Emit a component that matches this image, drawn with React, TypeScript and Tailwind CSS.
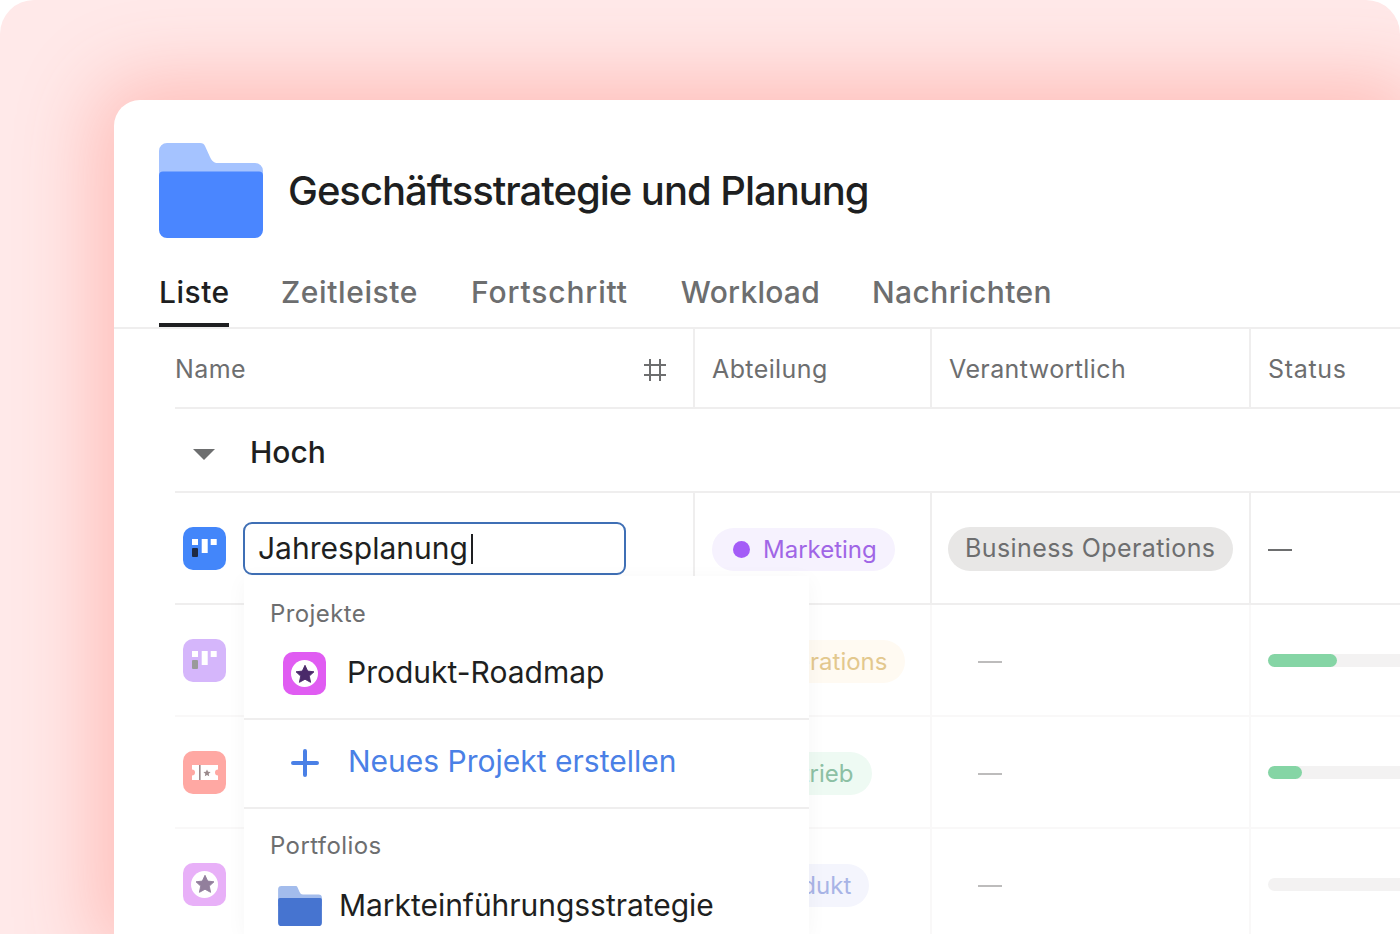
import React from "react";

const FONT = "font-['Inter','Noto_Sans',sans-serif]";

function Star({ color }: { color: string }) {
  return (
    <svg viewBox="0 0 24 24" className="h-[22px] w-[22px]">
      <path
        d="M12 2.5l2.9 6.3 6.9.8-5.1 4.7 1.400 6.800-6.100-3.400-6.100 3.400 1.400-6.800-5.100-4.700 6.900-.8z"
        fill={color}
        stroke={color}
        strokeLinejoin="round"
      />
    </svg>
  );
}

function BoardIcon({ bg, dark }: { bg: string; dark: string }) {
  return (
    <svg viewBox="0 0 43 43" className="h-[43px] w-[43px] shrink-0">
      <rect width="43" height="43" rx="10" fill={bg} />
      <rect x="9" y="12" width="6" height="6" fill="#fff" />
      <rect x="9" y="21" width="6" height="9" rx="1" fill={dark} />
      <rect x="18.7" y="12" width="6" height="14" fill="#fff" />
      <rect x="27.7" y="12" width="6" height="6" fill="#fff" />
    </svg>
  );
}

function StarIcon({ bg, star }: { bg: string; star: string }) {
  return (
    <div className={`flex h-[43px] w-[43px] shrink-0 items-center justify-center rounded-[10px] ${bg}`}>
      <div className="flex h-[27px] w-[27px] items-center justify-center rounded-full bg-white">
        <Star color={star} />
      </div>
    </div>
  );
}

function TicketIcon() {
  return (
    <svg viewBox="0 0 43 43" className="h-[43px] w-[43px] shrink-0">
      <rect width="43" height="43" rx="10" fill="#ffa8a3" />
      <path
        d="M9 14h26v4.500a3 3 0 0 0 0 6V29H9v-4.500a3 3 0 0 0 0-6z"
        fill="#fff"
      />
      <rect x="16" y="14" width="1.600" height="15" fill="#9a8a8c" />
      <path
        d="M24 18.500l1.100 2.300 2.500.3-1.900 1.700.5 2.500-2.200-1.200-2.200 1.200.5-2.500-1.900-1.700 2.500-.3z"
        fill="#9a8a8c"
      />
    </svg>
  );
}

function Folder({ className, back, front }: { className: string; back: string; front: string }) {
  return (
    <svg viewBox="0 0 104 95" className={className}>
      <path
        d="M8 0h33c3 0 4 1 5 3l5 11c2 4 4 6 8 6h37a8 8 0 0 1 8 8v20H0V8a8 8 0 0 1 8-8z"
        fill={back}
      />
      <path
        d="M4 28.500h96a4 4 0 0 1 4 4V87a8 8 0 0 1-8 8H8a8 8 0 0 1-8-8V32.500a4 4 0 0 1 4-4z"
        fill={front}
      />
    </svg>
  );
}

function Pill({ dot, bg, text, label }: { dot: string; bg: string; text: string; label: string }) {
  return (
    <div className={`flex h-[43px] w-fit items-center rounded-full pl-[21px] pr-[18px] ${bg}`}>
      <span className={`mr-[13px] h-[17px] w-[17px] rounded-full ${dot}`} />
      <span className={`pt-[2px] text-[24px] ${text}`}>{label}</span>
    </div>
  );
}

function Bar({ fill }: { fill: string }) {
  return (
    <div className="h-[13px] w-full rounded-l-full bg-[#f3f2f2]">
      <div className={`h-[13px] rounded-full bg-[#85d5a5] ${fill}`} />
    </div>
  );
}

const COLS = "grid grid-cols-[520px_237px_319px_1fr]";

function FadedRow({ icon, pill, bar }: { icon: React.ReactNode; pill: React.ReactNode; bar: React.ReactNode }) {
  return (
    <div className={`${COLS} h-[112px] border-b-2 border-[#f9f8f8]`}>
      <div className="flex items-center border-r-2 border-[#f9f8f8] pl-2">{icon}</div>
      <div className="flex items-center border-r-2 border-[#f9f8f8] pl-[17px] pt-[2px]">{pill}</div>
      <div className="flex items-center border-r-2 border-[#f9f8f8] pl-[46px] pt-[4px]">
        <span className="h-[2px] w-[24px] bg-[#bdbcbc]" />
      </div>
      <div className="flex items-center pl-[17px]">{bar}</div>
    </div>
  );
}

const TABS = [
  { label: "Liste", cls: "h-[62px] w-[70px] border-b-[4px] border-[#1e1f21] text-[#1e1f21]" },
  { label: "Zeitleiste", cls: "-ml-px tracking-[0.6px]" },
  { label: "Fortschritt", cls: "tracking-[0.85px]" },
  { label: "Workload", cls: "tracking-[0.25px]" },
  { label: "Nachrichten", cls: "-ml-px tracking-[0.4px]" },
];

export default function App() {
  return (
    <div className={`h-[934px] w-full overflow-hidden bg-white ${FONT}`}>
      {/* Pink panel */}
      <div className="h-[934px] overflow-hidden rounded-t-[34px] bg-[#ffe9e9] pl-[114px] pt-[100px]">
        {/* Card */}
        <div className="relative h-[834px] rounded-tl-[26px] bg-white shadow-[0_0_80px_20px_#ffbdb8]">
          {/* Title */}
          <div className="flex items-center pl-[45px] pt-[43px]">
            <Folder className="h-[95px] w-[104px]" back="#a5c3ff" front="#4a86ff" />
            <h1 className="ml-[25px] text-[40px] font-medium tracking-[-1.02px] text-[#1e1f21]">
              Geschäftsstrategie und Planung
            </h1>
          </div>

          {/* Tabs */}
          <div className="mt-[27px] flex h-[64px] gap-[53px] border-b-2 border-[#efeeee] pl-[45px] text-[30px] font-medium tracking-[0.5px] text-[#6d6e6f]">
            {TABS.map((tab) => (
              <div key={tab.label} className={`pt-[5px] ${tab.cls}`}>
                {tab.label}
              </div>
            ))}
          </div>

          {/* Table */}
          <div className="ml-[61px]">
            <div className={`${COLS} h-[80px] border-b-2 border-[#efeeee] text-[25px] tracking-[0.4px] text-[#6d6e6f]`}>
              <div className="flex items-center justify-between border-r-2 border-[#efeeee] pr-[27px] pt-[4px]">
                <span>Name</span>
                <svg viewBox="0 0 22 24" className="h-[24px] w-[22px]" stroke="#6d6e6f" strokeWidth="2">
                  <path d="M6 1v22M16 1v22M0 7h22M0 17h22" />
                </svg>
              </div>
              <div className="flex items-center border-r-2 border-[#efeeee] pl-[17px] pt-[4px]">Abteilung</div>
              <div className="flex items-center border-r-2 border-[#efeeee] pl-[17px] pt-[4px]">Verantwortlich</div>
              <div className="flex items-center pl-[17px] pt-[4px] tracking-[0.7px]">Status</div>
            </div>

            <div className="flex h-[84px] items-center border-b-2 border-[#efeeee] pl-[18px] pt-[4px] text-[30px] font-medium text-[#1e1f21]">
              <svg viewBox="0 0 22 11" className="mt-[4px] h-[11px] w-[22px]">
                <path d="M0 0h22L11 11z" fill="#6d6e6f" />
              </svg>
              <span className="ml-[35px]">Hoch</span>
            </div>

            {/* Active row */}
            <div className={`${COLS} h-[112px] border-b-2 border-[#efeeee]`}>
              <div className="flex items-center border-r-2 border-[#efeeee] pl-2 pt-[1px]">
                <BoardIcon bg="#4386fa" dark="#1e2a44" />
                <div className="ml-[17px] flex h-[53px] w-[383px] items-center rounded-[9px] border-2 border-[#3f6fb5] pl-[13px] text-[30px] text-[#1e1f21]">
                  Jahresplanung
                  <span className="ml-[3px] h-[30px] w-[2px] bg-[#1e1f21]" />
                </div>
              </div>
              <div className="flex items-center border-r-2 border-[#efeeee] pl-[17px] pt-[2px]">
                <Pill dot="bg-[#a45cf7]" bg="bg-[#f6f2fe]" text="text-[#a066e6]" label="Marketing" />
              </div>
              <div className="flex items-center border-r-2 border-[#efeeee] pl-[16px] pt-[2px]">
                <div className="flex h-[44px] items-center rounded-full bg-[#e8e7e6] pl-[17px] pr-[18px] text-[25px] tracking-[0.4px] text-[#6d6e6f]">
                  Business Operations
                </div>
              </div>
              <div className="flex items-center pl-[17px] pt-[4px]">
                <span className="h-[2px] w-[24px] bg-[#6d6e6f]" />
              </div>
            </div>

            <FadedRow
              icon={<BoardIcon bg="#d5b6fb" dark="#9a9a9a" />}
              pill={<Pill dot="bg-[#f8dfae]" bg="bg-[#fffaf2]" text="text-[#e3c88e]" label="Operations" />}
              bar={<Bar fill="w-[69px]" />}
            />
            <FadedRow
              icon={<TicketIcon />}
              pill={<Pill dot="bg-[#b4e2c8]" bg="bg-[#eefaf3]" text="text-[#8cc0a4]" label="Vertrieb" />}
              bar={<Bar fill="w-[34px]" />}
            />
            <FadedRow
              icon={<StarIcon bg="bg-[#e8b0f8]" star="#927f9c" />}
              pill={<Pill dot="bg-[#c2cbf5]" bg="bg-[#f4f5fd]" text="text-[#a8b4e6]" label="Produkt" />}
              bar={<Bar fill="w-0" />}
            />
          </div>

          {/* Dropdown menu */}
          <div className="absolute left-[130px] top-[476px] h-[358px] w-[565px] bg-white text-[30px] shadow-[0_4px_20px_rgba(0,0,0,0.04)]">
            <div className="h-[144px] border-b-2 border-[#efeeee]">
              <div className="pl-[26px] pt-[23px] text-[24px] leading-[30px] tracking-[0.4px] text-[#6d6e6f]">Projekte</div>
              <div className="mt-[21px] flex items-center pl-[39px] text-[#1e1f21]">
                <StarIcon bg="bg-[#e05cf2]" star="#4a2a6a" />
                <span className="mb-[2px] ml-[21px]">Produkt-Roadmap</span>
              </div>
            </div>
            <div className="flex h-[89px] items-center border-b-2 border-[#efeeee] pl-[47px] text-[#4a80e6]">
              <svg viewBox="0 0 28 28" className="mb-[2px] h-[28px] w-[28px]" stroke="#4a80e6" strokeWidth="4" strokeLinecap="round">
                <path d="M14 2v24M2 14h24" />
              </svg>
              <span className="mb-[5px] ml-[29px]">Neues Projekt erstellen</span>
            </div>
            <div className="pl-[26px] pt-[22px] text-[24px] leading-[30px] tracking-[0.4px] text-[#6d6e6f]">Portfolios</div>
            <div className="mt-[22px] flex items-center pl-[34px] text-[#1e1f21]">
              <Folder className="h-[40px] w-[44px]" back="#a3bcec" front="#4674d0" />
              <span className="ml-[17px] tracking-[-0.04px]">Markteinführungsstrategie</span>
            </div>
          </div>
        </div>
      </div>
    </div>
  );
}
